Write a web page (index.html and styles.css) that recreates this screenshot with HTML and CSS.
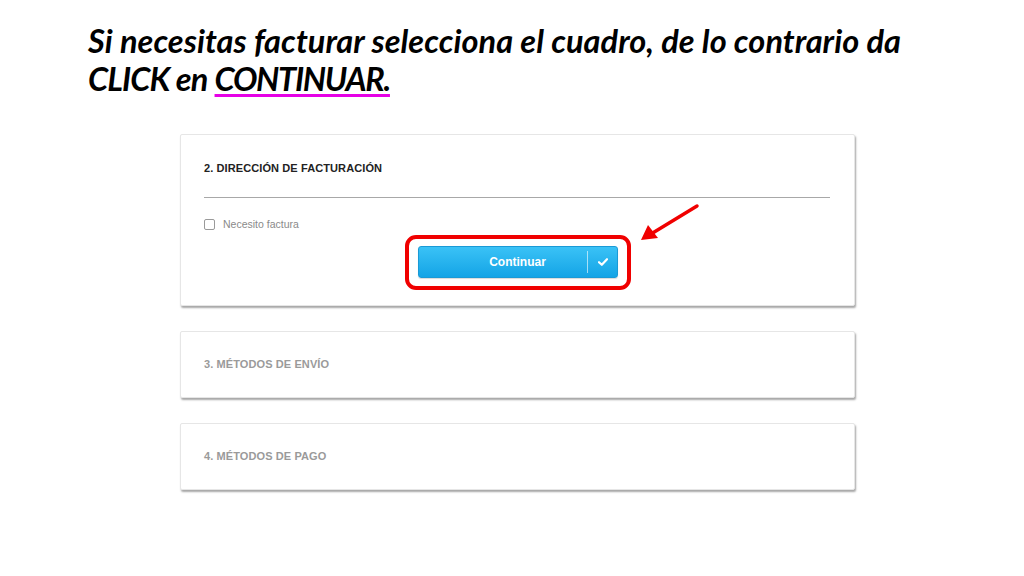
FILE: index.html
```html
<!DOCTYPE html>
<html lang="es">
<head>
<meta charset="utf-8">
<title>Facturación</title>
<link rel="stylesheet" href="styles.css">
</head>
<body>
<div class="slide">
  <h1 class="title">Si necesitas facturar selecciona el cuadro, de lo contrario da <span class="caps">CLICK en</span> <span class="hl">CONTINUAR.</span></h1>
  <div class="steps">
    <section class="card card-active">
      <h2 class="card-title">2. DIRECCIÓN DE FACTURACIÓN</h2>
      <hr class="rule">
      <label class="check"><span class="box"></span>Necesito factura</label>
      <div class="btn-row">
        <div class="btn-wrap">
          <button class="btn"><span class="btn-label">Continuar</span><span class="btn-icon"><svg width="10" height="8" viewBox="0 0 10 8"><path d="M1 4.2 L3.8 6.8 L9 1.2" fill="none" stroke="#fff" stroke-width="2.2" stroke-linecap="round" stroke-linejoin="round"/></svg></span></button>
          <span class="marker"></span>
        </div>
      </div>
      <svg class="arrow" width="64" height="42" viewBox="0 0 64 42"><line x1="60" y1="3" x2="14" y2="31" stroke="#f00000" stroke-width="3.5" stroke-linecap="round"/><polygon points="4,37 11,22 21,35" fill="#f00000"/></svg>
    </section>
    <section class="card card-muted">
      <h2 class="card-title">3. MÉTODOS DE ENVÍO</h2>
    </section>
    <section class="card card-muted">
      <h2 class="card-title">4. MÉTODOS DE PAGO</h2>
    </section>
  </div>
</div>
</body>
</html>
```

FILE: styles.css
```css
html, body {
  margin: 0;
  padding: 0;
  background: #ffffff;
}
.slide {
  width: 1024px;
  height: 576px;
  position: relative;
  overflow: hidden;
}
.title {
  margin: 0;
  padding: 22px 0 0 88px;
  width: 830px;
  font-family: Lato, "Open Sans", sans-serif;
  font-style: italic;
  font-weight: 700;
  font-size: 32.5px;
  line-height: 38px;
  color: #000;
  letter-spacing: 0.05px;
}
.caps {
  letter-spacing: -0.9px;
}
.hl {
  letter-spacing: -1.3px;
  text-decoration: underline;
  text-decoration-color: #e600e6;
  text-decoration-thickness: 3px;
  text-underline-offset: 3px;
}
.steps {
  margin: 36px 0 0 180px;
  width: 675px;
  display: flex;
  flex-direction: column;
  gap: 25px;
}
.card {
  background: #fff;
  border: 1px solid #e6e6e6;
  border-radius: 2px;
  box-shadow: 1px 2px 2px rgba(0,0,0,0.35);
  box-sizing: border-box;
  position: relative;
  font-family: "Liberation Sans", Arial, sans-serif;
}
.card-active {
  height: 172px;
  padding: 27px 24px 0 23px;
}
.card-muted {
  height: 67px;
  padding: 26px 24px 0 23px;
}
.card-title {
  margin: 0;
  font-size: 11px;
  font-weight: 700;
  line-height: 13px;
  color: #222;
  letter-spacing: 0.1px;
}
.card-muted .card-title {
  color: #9a9a9a;
}
.rule {
  margin: 22px 0 0 0;
  border: 0;
  border-top: 1px solid #a8a8a8;
  height: 0;
}
.check {
  display: flex;
  align-items: center;
  gap: 8px;
  margin-top: 20px;
  font-size: 10.5px;
  color: #8a8a8a;
}
.box {
  width: 9px;
  height: 9px;
  border: 1px solid #9a9a9a;
  border-radius: 2px;
}
.btn-row {
  display: flex;
  padding-left: 214px;
  margin-top: 16px;
}
.btn-wrap {
  position: relative;
}
.btn {
  width: 200px;
  height: 32px;
  border: 1px solid #1a9ad6;
  border-radius: 3px;
  background: linear-gradient(#3ac2f6, #14a4e6);
  display: flex;
  align-items: center;
  padding: 0;
  font-family: "Liberation Sans", Arial, sans-serif;
  font-weight: 700;
  font-size: 12px;
  color: #fff;
  box-shadow: 0 1px 1px rgba(0,0,0,0.15);
}
.btn-label {
  flex: 1;
  text-align: center;
  padding-left: 29px;
}
.btn-icon {
  width: 29px;
  height: 22px;
  border-left: 1px solid rgba(255,255,255,0.6);
  display: flex;
  align-items: center;
  justify-content: center;
}
.marker {
  position: absolute;
  left: -13px;
  top: -11px;
  width: 218px;
  height: 47px;
  border: 4px solid #f00000;
  border-radius: 11px;
  pointer-events: none;
}
.arrow {
  position: absolute;
  left: 456px;
  top: 68px;
}
```
